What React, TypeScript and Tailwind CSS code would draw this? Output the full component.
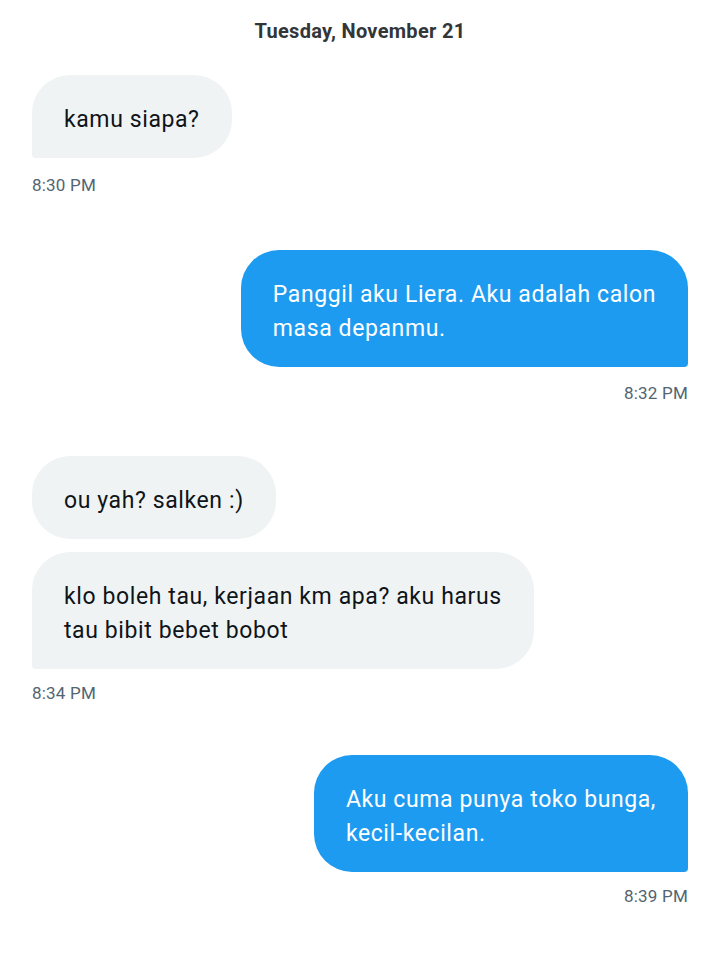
import React from "react";

const font = { fontFamily: "Roboto, 'Noto Sans', sans-serif" };

function In({ children, last }: { children: React.ReactNode; last?: boolean }) {
  return (
    <div className="flex justify-start">
      <div
        className={`bg-[#eff3f4] text-[#0f1419] text-[23px] leading-[34px] tracking-[0.6px] px-8 pt-[27.5px] pb-[21.5px] whitespace-nowrap rounded-[38px] ${
          last ? "rounded-bl-[4px]" : ""
        }`}
      >
        {children}
      </div>
    </div>
  );
}

function Out({ children }: { children: React.ReactNode }) {
  return (
    <div className="flex justify-end">
      <div className="bg-[#1d9bf0] text-white text-[23px] leading-[34px] tracking-[0.6px] px-8 pt-[27.5px] pb-[21.5px] whitespace-nowrap rounded-[38px] rounded-br-[4px]">
        {children}
      </div>
    </div>
  );
}

function Time({
  children,
  right,
  className = "",
}: {
  children: React.ReactNode;
  right?: boolean;
  className?: string;
}) {
  return (
    <div
      className={`text-[17px] leading-[20px] tracking-[0.2px] text-[#536471] ${
        right ? "text-right" : "text-left"
      } ${className}`}
    >
      {children}
    </div>
  );
}

export default function App() {
  return (
    <div className="w-[720px] h-[962px] bg-white px-8 overflow-hidden" style={font}>
      <div className="pt-[18px] text-center text-[20px] leading-[26px] font-bold text-[#333639] tracking-[0.3px]">
        Tuesday, November 21
      </div>

      <div className="mt-[31px]">
        <In last>kamu siapa?</In>
        <Time className="mt-[17px]">8:30 PM</Time>
      </div>

      <div className="mt-[55px]">
        <Out>
          Panggil aku Liera. Aku adalah calon
          <br />
          masa depanmu.
        </Out>
        <Time right className="mt-[16px]">
          8:32 PM
        </Time>
      </div>

      <div className="mt-[53px]">
        <In>ou yah? salken :)</In>
        <div className="mt-[13px]">
          <In last>
            klo boleh tau, kerjaan km apa? aku harus
            <br />
            tau bibit bebet bobot
          </In>
        </div>
        <Time className="mt-[14px]">8:34 PM</Time>
      </div>

      <div className="mt-[52px]">
        <Out>
          Aku cuma punya toko bunga,
          <br />
          kecil-kecilan.
        </Out>
        <Time right className="mt-[14px]">
          8:39 PM
        </Time>
      </div>
    </div>
  );
}
